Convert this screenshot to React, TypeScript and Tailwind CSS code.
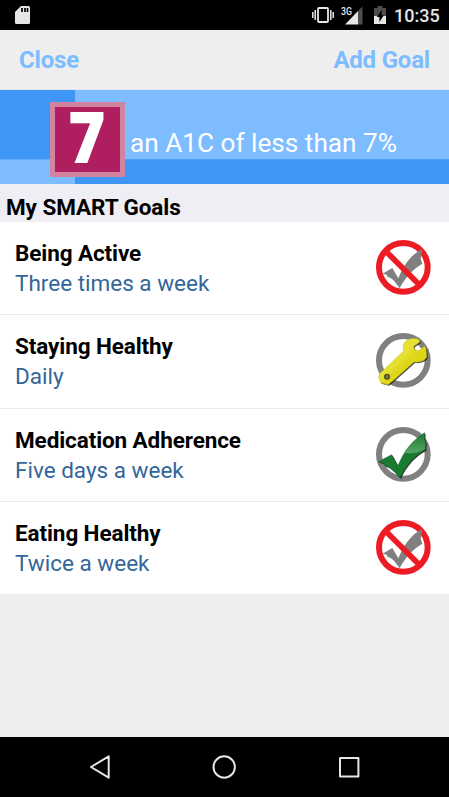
import React from 'react';

type GoalStatus = 'missed' | 'working' | 'done';

interface Goal {
  title: string;
  frequency: string;
  status: GoalStatus;
}

const goals: Goal[] = [
  { title: 'Being Active', frequency: 'Three times a week', status: 'missed' },
  { title: 'Staying Healthy', frequency: 'Daily', status: 'working' },
  { title: 'Medication Adherence', frequency: 'Five days a week', status: 'done' },
  { title: 'Eating Healthy', frequency: 'Twice a week', status: 'missed' },
];

function MissedIcon() {
  return (
    <svg viewBox="0 0 165 165" className="w-[55px] h-[55px] overflow-visible">
      <circle cx="82" cy="82" r="73" fill="none" stroke="#ed1c24" strokeWidth="18" />
      <path d="M20 101L49 84L67 115C82 76 104 46 138 26L137 44L134 56L139 71C110 89 88 111 71 145C58 126 45 110 35 111L32 104Z" fill="#808080" />
      <path d="M34 38L127 131" stroke="#ed1c24" strokeWidth="17" />
    </svg>
  );
}

function WorkingIcon() {
  const wrench =
    'M11 122L83 54C78 38 85 24 101 18C112 15 122 16 130 20L131 28L113 40L116 51L129 53L145 40L150 45L152 73C146 84 130 89 114 87L49 145L36 155L14 149L8 133Z';
  return (
    <svg viewBox="0 0 165 165" className="w-[55px] h-[55px] overflow-visible">
      <defs>
        <linearGradient id="wrench" x1="0" y1="0" x2="1" y2="1">
          <stop offset="0" stopColor="#e8e337" />
          <stop offset="0.45" stopColor="#e6e032" />
          <stop offset="0.55" stopColor="#ddd61a" />
          <stop offset="1" stopColor="#dcd518" />
        </linearGradient>
        <filter id="wrenchShadow" x="-20%" y="-20%" width="140%" height="140%">
          <feGaussianBlur stdDeviation="2" />
        </filter>
      </defs>
      <circle cx="82" cy="82" r="73" fill="none" stroke="#808080" strokeWidth="18" />
      <path d={wrench} transform="translate(3 3)" fill="#000" opacity="0.75" filter="url(#wrenchShadow)" />
      <path d={wrench} fill="url(#wrench)" stroke="#c4be16" strokeWidth="1.5" />
      <circle cx="33" cy="131" r="7" fill="#777" stroke="#4e4b13" strokeWidth="4" />
    </svg>
  );
}

function DoneIcon() {
  const check = 'M7 104L47 83L66 117C82 74 110 40 146 17L145 34L149 49L148 68C118 85 90 111 72 153C54 132 42 119 26 116L22 108Z';
  return (
    <svg viewBox="0 0 165 165" className="w-[55px] h-[55px] overflow-visible">
      <defs>
        <linearGradient id="shine" x1="0" y1="0" x2="0" y2="1">
          <stop offset="0" stopColor="#187b30" />
          <stop offset="1" stopColor="#58a568" />
        </linearGradient>
        <filter id="checkShadow" x="-20%" y="-20%" width="140%" height="140%">
          <feGaussianBlur stdDeviation="2" />
        </filter>
      </defs>
      <circle cx="82" cy="82" r="73" fill="none" stroke="#808080" strokeWidth="18" />
      <path d={check} transform="translate(3 3)" fill="#000" opacity="0.75" filter="url(#checkShadow)" />
      <path d={check} fill="#187b30" stroke="#126126" strokeWidth="1.5" />
      <path d="M84 78C99 53 120 34 145 20L144 34L148 50L147 66C126 80 105 79 84 78Z" fill="url(#shine)" />
    </svg>
  );
}

function StatusIcon({ status }: { status: GoalStatus }) {
  if (status === 'working') return <WorkingIcon />;
  if (status === 'done') return <DoneIcon />;
  return <MissedIcon />;
}

function StatusBar() {
  return (
    <div className="h-[30px] shrink-0 bg-black flex items-center pl-[15px] pr-[10px]">
      <svg viewBox="0 0 15 18" className="w-[15px] h-[18px]">
        <path d="M6 0H13.5Q15 0 15 1.5V16.5Q15 18 13.5 18H1.5Q0 18 0 16.5V6Z" fill="#e6e6e6" />
        <path d="M7 2V6M10 2V6M12.5 2V6" stroke="#000" strokeWidth="1.7" />
      </svg>
      <svg viewBox="0 0 22 18" className="w-[22px] h-[18px] ml-auto" fill="none" stroke="#e6e6e6">
        <rect x="6" y="2" width="10" height="14" rx="1" strokeWidth="1.8" />
        <path d="M3.2 4V14M18.8 4V14M0.8 6V12M21.2 6V12" strokeWidth="1.5" />
      </svg>
      <svg viewBox="0 0 23 19" className="w-[23px] h-[19px] ml-[7px]">
        <path d="M21.5 0.5V18.5H17V5Z" fill="#4d4d4d" />
        <path d="M17 5V18.5H4Z" fill="#e6e6e6" />
        <text x="0" y="8.5" fontSize="10.5" fontFamily="Roboto" fontWeight="500" textLength="11" lengthAdjust="spacingAndGlyphs" fill="#e6e6e6">3G</text>
      </svg>
      <svg viewBox="0 0 12 18" className="w-[12px] h-[18px] ml-[10px]">
        <path d="M3.5 0H8.5V2H12V10H0V2H3.5Z" fill="#4d4d4d" />
        <path d="M0 10H12V18H0Z" fill="#e6e6e6" />
        <path d="M7.7 4L2.8 11H5.4V16L9.9 9.3H7.7Z" fill="#000" />
      </svg>
      <span className="w-[45px] ml-[8px] text-[18px] leading-[30px] pt-px font-medium text-[#e6e6e6] whitespace-nowrap">10:35</span>
    </div>
  );
}

function GoalBanner() {
  return (
    <div className="relative h-[94px] shrink-0 grid grid-cols-[75px_1fr] grid-rows-[69px_25px]">
      <div className="bg-[#3f96f5]" />
      <div className="bg-[#7dbcff]" />
      <div className="bg-[#7dbcff] border-t border-[#61acff]" />
      <div className="bg-[#3f96f5] border-t border-[#4da1fb]" />
      <div className="absolute left-[50px] top-[12px] flex">
        <div className="w-[75px] h-[75px] pr-[2px] bg-[#af1f5f] border-5 border-[#d2839d] flex items-start justify-center">
          <span className="font-['Open_Sans'] font-extrabold text-[71px] leading-[57px] scale-x-90 text-white">7</span>
        </div>
        <p className="ml-[5px] mt-[25px] text-[26.2px] leading-[32px] text-white whitespace-nowrap">an A1C of less than 7%</p>
      </div>
    </div>
  );
}

function NavBar() {
  return (
    <div className="h-[60px] shrink-0 bg-black flex items-center justify-between pl-[87px] pr-[88px]">
      <svg viewBox="0 0 24 24" className="w-6 h-6" fill="none" stroke="#e6e6e6" strokeWidth="2" strokeLinejoin="round">
        <path d="M21.7 1.3V22.7L4 12Z" />
      </svg>
      <svg viewBox="0 0 24 24" className="w-6 h-6" fill="none" stroke="#e6e6e6" strokeWidth="2">
        <circle cx="12.2" cy="12" r="10.7" />
      </svg>
      <svg viewBox="0 0 24 24" className="w-6 h-6" fill="none" stroke="#e6e6e6" strokeWidth="2" strokeLinejoin="round">
        <rect x="3" y="3" width="18.4" height="18.4" />
      </svg>
    </div>
  );
}

export default function App() {
  return (
    <div className="w-[449px] h-[797px] flex flex-col overflow-hidden bg-[#eeeeee] font-[Roboto,sans-serif]">
      <StatusBar />
      <header className="h-[60px] shrink-0 flex items-center justify-between px-[19px] border-b border-[#e0e6ec] text-[24px] tracking-[-0.2px] font-bold text-[#7dbcff]">
        <button>Close</button>
        <button>Add Goal</button>
      </header>
      <GoalBanner />
      <h2 className="h-[38px] shrink-0 pl-[6px] pt-[6px] bg-[#efeef4] text-[22.5px] leading-[34px] tracking-[-0.08px] font-bold text-black">My SMART Goals</h2>
      <ul className="h-[373px] shrink-0 flex flex-col bg-white">
        {goals.map(goal => (
          <li key={goal.title} className="flex-1 flex items-center justify-between pl-[15px] pr-[18px] border-b border-[#ebebeb]">
            <div className="text-[22.5px] leading-[30px]">
              <div className="tracking-[-0.1px] font-bold text-black">{goal.title}</div>
              <div className="text-[#336699]">{goal.frequency}</div>
            </div>
            <div className="pb-px">
              <StatusIcon status={goal.status} />
            </div>
          </li>
        ))}
      </ul>
      <div className="flex-1" />
      <NavBar />
    </div>
  );
}
